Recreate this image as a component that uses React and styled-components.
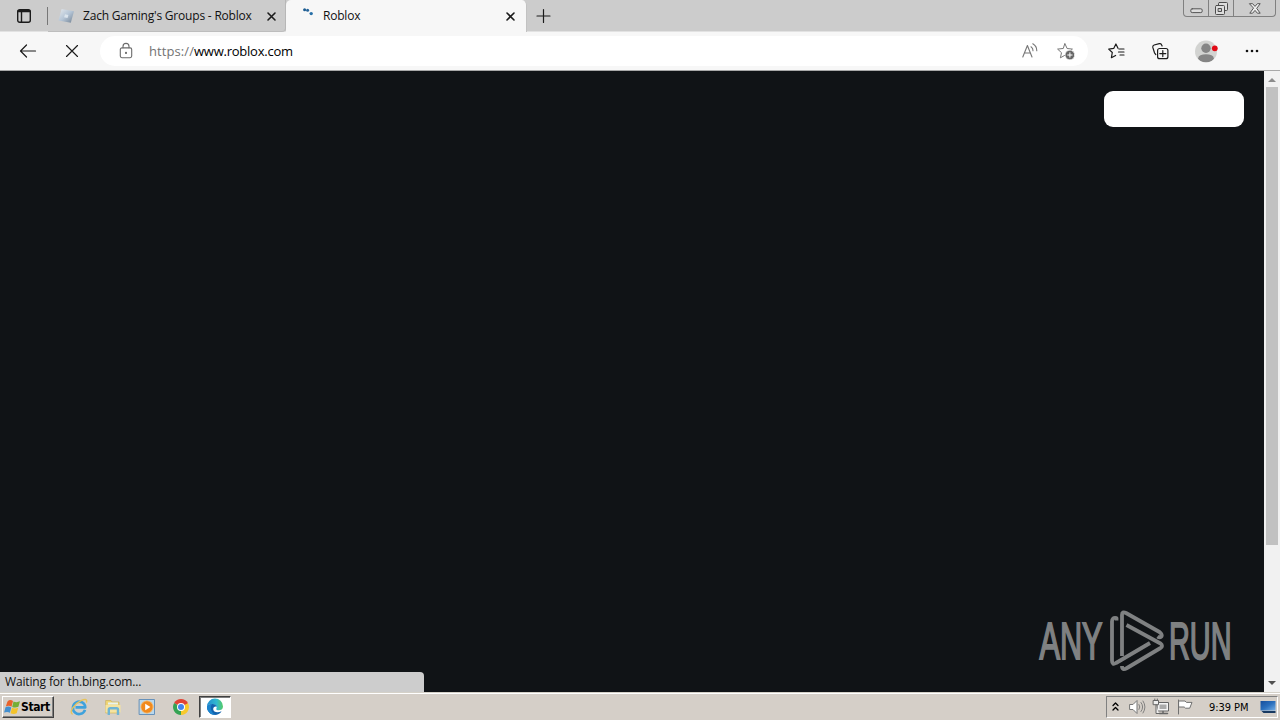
import React from 'react';
import styled, { createGlobalStyle, css } from 'styled-components';

/*──────── constants ────────*/
const UI_FONT = "'Open Sans', 'Noto Sans', sans-serif";
const CLASSIC_FONT = "'DejaVu Sans Condensed', 'DejaVu Sans', sans-serif";

const GlobalStyle = createGlobalStyle`
  *, *::before, *::after { box-sizing: border-box; }
  body { margin: 0; overflow: hidden; background: #d4d0c8; }
`;

const Desktop = styled.div`
  display: flex; flex-direction: column;
  width: 1280px; height: 720px; overflow: hidden;
  font: 12px/16px ${UI_FONT}; color: #111;
`;

/*──────── tab strip ────────*/
const TabStrip = styled.header`
  display: flex; align-items: stretch;
  height: 32px; flex: none;
  background: #cccccc;
  border-bottom: 1px solid #e2e2e2;
`;
const TabActions = styled.div`
  display: flex; align-items: center; justify-content: center;
  width: 48px; margin: 7px 0 6px;
  border-right: 1px solid #777;
`;
const Tab = styled.div`
  display: flex; align-items: center;
  height: 32px; padding: 0 11px 0 10px;
  width: ${p => (p.$active ? 241 : 238)}px;
  ${p => p.$active ? css`
    background: #f7f7f7; border-radius: 5px 5px 0 0; padding-left: 16px;
    border-right: 1px solid #c2c2c2;
  ` : css`
    padding: 1px 9px 0 10px;
    border-right: 1px solid #b7b7b7; border-bottom: 1px solid #bdbdbd;
    border-radius: 0 0 4px 0;
  `}
`;
const TabTitle = styled.span`
  flex: 1; margin-left: ${p => p.$gap}px; white-space: nowrap;
  letter-spacing: -0.2px;
`;
const NewTab = styled.div`
  display: flex; align-items: center; padding-left: 9px;
`;
const CaptionButtons = styled.div`
  display: flex; height: 17px; margin: 0 4px 0 auto;
  border: 1px solid #808080; border-top: 0; border-radius: 0 0 4px 4px;
  overflow: hidden;
`;
const CaptionButton = styled.div`
  display: flex; align-items: center; justify-content: center;
  width: ${p => p.$width}px; border-left: ${p => (p.$first ? 0 : '1px solid #808080')};
  padding-top: ${p => p.$drop || 0}px;
`;

/*──────── toolbar ────────*/
const Toolbar = styled.div`
  display: flex; align-items: center;
  height: 39px; flex: none; padding: 0 21px 0 19px;
  background: #f7f7f7; border-bottom: 1px solid #a8a8a8;
`;
const NavButtons = styled.div`
  display: flex; align-items: center; gap: 27px; width: 81px;
`;
const AddressBar = styled.div`
  display: flex; align-items: center;
  width: 988px; height: 30px; padding: 0 13px 0 18px;
  border-radius: 15px; background: #fff;
`;
const Url = styled.span`
  flex: 1; margin-left: 16px;
  font-size: 13px; color: #000; letter-spacing: -0.24px;
  span { color: #737373; letter-spacing: 0.08px; }
`;
const AddressActions = styled.div`
  display: flex; align-items: center; gap: 18px;
`;
const ToolbarActions = styled.div`
  display: flex; align-items: center; justify-content: space-between;
  flex: 1; margin-left: 20px;
`;

/*──────── page ────────*/
const Viewport = styled.main`
  position: relative;
  display: flex; height: 621px; flex: none;
`;
const Page = styled.div`
  display: flex; flex-direction: column; justify-content: space-between; align-items: flex-end;
  flex: 1; padding: 20px 20px 19px 0;
  background: #101316;
`;
const BlankButton = styled.div`
  width: 140px; height: 36px; border-radius: 9px; background: #fff;
`;
const Watermark = styled.svg`
  display: block; width: 208px; height: 64px; margin-right: 6px; overflow: visible;
`;
const Scrollbar = styled.div`
  display: flex; flex-direction: column; align-items: center;
  width: 16px; background: #f1f1f1;
`;
const ScrollArrow = styled.div`
  display: flex; align-items: center; justify-content: center;
  height: 16px; margin-top: ${p => (p.$bottom ? 'auto' : 0)};
  padding: ${p => (p.$bottom ? '0 0 2px' : '2px 0 0')};
`;
const Thumb = styled.div`
  width: 12px; height: 458px; background: #c1c1c1;
`;
const StatusBubble = styled.div`
  position: absolute; left: 0; bottom: 0;
  width: 424px; height: 20px; padding: 2px 5px;
  border-radius: 0 4px 0 0; background: #cdcdcd;
  letter-spacing: -0.15px;
`;

/*──────── taskbar ────────*/
const Taskbar = styled.footer`
  display: flex; align-items: center;
  height: 28px; flex: none; padding: 3px 2px 2px;
  background: #d5cfc8; border-top: 1px solid #d5d1c8;
  box-shadow: inset 0 1px 0 #fff;
  font-family: ${CLASSIC_FONT};
`;
const StartButton = styled.div`
  display: flex; align-items: center;
  width: 52px; height: 22px; padding-left: 1px;
  border: 1px solid; border-color: #fff #404040 #404040 #fff;
  box-shadow: inset -1px -1px 0 #808080;
  font-size: 12px; font-weight: 700; letter-spacing: -0.4px; color: #000;
`;
const QuickLaunch = styled.div`
  display: flex; align-items: center; gap: 16px; margin-left: 16px;
`;
const TaskButton = styled.div`
  display: flex; align-items: center; justify-content: center;
  width: 32px; height: 22px; margin-left: 9px;
  background: #fff;
  border: 1px solid; border-color: #404040 #fff #fff #404040;
  box-shadow: inset 1px 1px 0 #808080;
`;
const Tray = styled.div`
  display: flex; align-items: center;
  width: 172px; height: 22px; margin-left: auto; padding-left: 5px;
  border: 1px solid; border-color: #808080 #fff #fff #808080;
`;
const Clock = styled.span`
  margin: 1px 10px 0 16px; width: 41px; white-space: nowrap;
  font-size: 11px; letter-spacing: -0.06px; color: #000;
`;

/*──────── icons ────────*/
const Svg = styled.svg`
  display: block; flex: none; overflow: visible;
  fill: none; stroke: ${p => p.$color || '#1b1b1b'}; stroke-width: ${p => p.$weight || 1};
  stroke-linecap: round; stroke-linejoin: round;
  margin-left: ${p => p.$left || 0}px;
`;
const Icon = ({ w, h = w, color, weight, left, children }) => (
  <Svg width={w} height={h} viewBox={`0 0 ${w} ${h}`} $color={color} $weight={weight} $left={left}>
    {children}
  </Svg>
);

const TabActionsIcon = () => (
  <Icon w={14} weight={1.4}>
    <rect x="0.7" y="0.7" width="12.6" height="12.6" rx="2" />
    <path d="M1.5 2.2h11" strokeWidth="2.2" />
    <path d="M4.5 3v10" />
  </Icon>
);
const RobloxFavicon = () => (
  <Icon w={16} color="none">
    <defs>
      <linearGradient id="rbx" x1="0" y1="0" x2="1" y2="1">
        <stop offset="0" stopColor="#e4e8ec" /><stop offset="0.5" stopColor="#b5c5d6" /><stop offset="1" stopColor="#718192" />
      </linearGradient>
    </defs>
    <path d="M3.6 1L16 3.2L12.8 14.8L0.5 12.4Z" fill="url(#rbx)" />
    <path d="M7 6.2l3.4 0.7-0.9 3.1-3.4-0.7z" fill="#dce5ed" />
  </Icon>
);
const Spinner = () => (
  <Icon w={16} color="none">
    <circle cx="2.6" cy="1.8" r="1.5" fill="#1c5c91" />
    <circle cx="5.6" cy="2.2" r="1.5" fill="#25649a" />
    <circle cx="9.2" cy="5.6" r="1.7" fill="#2870a8" />
  </Icon>
);
const TabClose = () => (
  <Icon w={9} weight={1.6}><path d="M1 1l7 7M8 1L1 8" /></Icon>
);
const BackIcon = () => (
  <Icon w={17} h={14} weight={1.2}><path d="M16.5 7H1.5M7.5 1L1.5 7l6 6" /></Icon>
);
const StopIcon = () => (
  <Icon w={12} weight={1.15} left={3}><path d="M0.5 0.5l11 11M11.5 0.5l-11 11" /></Icon>
);
const LockIcon = () => (
  <Icon w={14} h={16} color="#6b6b6b" weight={1.1} left={1}>
    <rect x="1.3" y="4.9" width="11.4" height="9.8" rx="1.6" />
    <path d="M4 4.8V3.4a3 3 0 0 1 6 0V4.8" />
    <circle cx="7" cy="9.9" r="0.5" fill="#6b6b6b" />
  </Icon>
);
const ReadAloudIcon = () => (
  <Icon w={17} h={16} color="#777" weight={1.1}>
    <path d="M0.8 14L5.4 2.5L10 14M2.5 10h5.8M9 3.8a4.5 4.5 0 0 1 2 4M10.8 0.8a8 8 0 0 1 4 7" />
  </Icon>
);
const STAR = 'M8 0.8L10.1 5.5L15.4 6.1L11.5 9.7L12.6 14.8L8 12.2L3.4 14.8L4.5 9.7L0.6 6.1L5.9 5.5Z';
const AddFavoriteIcon = () => (
  <Icon w={18} h={18} color="#777">
    <path d={STAR} transform="translate(0 1)" />
    <circle cx="12.9" cy="13" r="4.8" fill="#666" stroke="#fff" strokeWidth="0.6" />
    <path d="M10.7 13h4.4M12.9 10.8v4.4" stroke="#fff" />
  </Icon>
);
const FavoritesIcon = () => (
  <Icon w={17} h={16} weight={1.2}>
    <path d="M10 5.3L7.9 1L5.7 5.4L0.7 6.1L4.3 9.5L3.4 14.7L7.6 12.5M11 6h5M10.5 9h5.5M12 12h4" />
  </Icon>
);
const CollectionsIcon = () => (
  <Icon w={17} h={17} weight={1.2}>
    <rect x="5.6" y="5.5" width="10.3" height="10.2" rx="2" />
    <path d="M10.8 7.6v6M7.8 10.6h6M3.8 11.6L2.5 9.8L0.8 4.4a2 2 0 0 1 1.3-2.4l5.2-1.3a2 2 0 0 1 2.4 1.3l0.4 1" />
  </Icon>
);
const ProfileIcon = () => (
  <Icon w={23} color="none">
    <defs><clipPath id="face"><circle cx="11" cy="11.5" r="11" /></clipPath></defs>
    <circle cx="11" cy="11.5" r="11" fill="#d2d3d1" />
    <g clipPath="url(#face)" fill="#858585">
      <circle cx="11" cy="8.2" r="4.7" />
      <ellipse cx="11" cy="18.2" rx="7.8" ry="4" />
    </g>
    <circle cx="19.8" cy="8.3" r="2.9" fill="#e10b17" />
  </Icon>
);
const MoreIcon = () => (
  <Icon w={14} h={4} color="none">
    {[2, 7, 12].map(x => <circle key={x} cx={x} cy="2" r="1.3" fill="#111" />)}
  </Icon>
);

/* caption glyphs have a light core with a dark outline */
const MinimizeGlyph = () => (
  <Icon w={13} h={5} color="#555"><rect x="0.8" y="0.8" width="11.4" height="3.8" rx="1.4" fill="#ddd" /></Icon>
);
const RestoreGlyph = () => (
  <Icon w={13} color="#4c4c4c">
    <rect x="3.5" y="0.5" width="9" height="8" rx="1" fill="#ddd" />
    <rect x="0.5" y="3.5" width="9" height="9" rx="1" fill="#ddd" />
    <rect x="3.5" y="6.5" width="3" height="3" fill="#ccc" />
  </Icon>
);
const CloseGlyph = () => (
  <Icon w={12} h={11}>
    <path d="M0.8 0.7H3.6L6 3.4L8.4 0.7H11.2L7.7 5.4L11.2 10.2H8.4L6 7.4L3.6 10.2H0.8L4.3 5.4Z" fill="#eee" stroke="#555" />
  </Icon>
);

const WindowsFlag = () => (
  <Icon w={17} color="none">
    <path d="M3.5 2.4Q6 0 9 2L7.5 7.7Q5 6 1.8 7.4Z" fill="#e9622a" />
    <path d="M9.5 2.4Q12.5 3.9 16 2.3L14.4 7.8Q11.3 9.3 8.2 7.9Z" fill="#75ae35" />
    <path d="M1.5 8.3Q4.4 6.7 7.3 8.5L5.9 13.8Q3.4 12.2 0.1 13.6Z" fill="#438fcf" />
    <path d="M8 8.8Q11 10.2 14.2 8.8L12.7 14.2Q9.6 15.7 6.5 14.2Z" fill="#f3c32b" />
  </Icon>
);
const IeIcon = () => (
  <Icon w={18}>
    <path d="M15 11.8A6.2 6.2 0 1 1 15.3 9.4H5.5" stroke="#3fa2dc" strokeWidth="2.6" strokeLinecap="butt" />
    <path d="M2.2 16C-1 14 4 6 11 2.6C14.7 0.8 17.4 1 16.5 4" stroke="#e6c35c" strokeWidth="1.4" />
  </Icon>
);
const ExplorerIcon = () => (
  <Icon w={18}>
    <path d="M2 2.5h5l1 1.5h7v11H2z" fill="#efd574" stroke="#cdb25a" strokeWidth="0.7" />
    <path d="M4 4.5h10v2H4z" fill="#e9f3ee" stroke="none" />
    <path d="M1.5 7h15v7.5h-15z" fill="#f5e3a0" stroke="none" />
    <path d="M4.8 17V11.6q0-1.4 1.4-1.4h6.4q1.4 0 1.4 1.4V17" stroke="#6fb4d4" strokeWidth="2.4" strokeLinecap="butt" />
  </Icon>
);
const PlayerIcon = () => (
  <Icon w={18}>
    <rect x="1.5" y="1.5" width="15" height="15" fill="#b9d8ed" stroke="#6792bb" />
    <circle cx="9" cy="9" r="6.2" fill="#f18a1d" stroke="#f5c27f" strokeWidth="0.8" />
    <path d="M7.2 5.7L12.4 9L7.2 12.3Z" fill="#fff" stroke="none" />
  </Icon>
);
const ChromeIcon = () => (
  <Icon w={18} color="none">
    <path d="M9 9L2.1 5A8 8 0 0 1 15.9 5Z" fill="#e14335" />
    <path d="M9 9L15.9 5A8 8 0 0 1 9 17Z" fill="#f7c92c" />
    <path d="M9 9V17A8 8 0 0 1 2.1 5Z" fill="#35a354" />
    <path d="M9 5h6.9L9 9z" fill="#e14335" />
    <circle cx="9" cy="9" r="4" fill="#fff" /><circle cx="9" cy="9" r="3" fill="#4384ee" />
  </Icon>
);
const EdgeIcon = () => (
  <Icon w={18} color="none">
    <defs>
      <linearGradient id="edgeTop" x1="0" x2="1"><stop offset="0" stopColor="#228ed0" /><stop offset="0.6" stopColor="#31b9d0" /><stop offset="1" stopColor="#58cc64" /></linearGradient>
    </defs>
    <path d="M1 8.6A8 8 0 0 1 17 8.4C17 11 15 12.2 12.5 12.2C10 12.2 10 11 10.6 10C11.2 8.3 9 6 6 6C3.5 6 1.6 7.4 1 8.6Z" fill="url(#edgeTop)" />
    <path d="M1 8.6C2.2 6.8 4.5 5.8 6.8 6.1C9 6.4 10.6 7.5 10.8 8.7C9 7.8 7 9.3 7.2 11.3C7.4 14 11.2 15.4 15.6 13.3C14 16 11.5 17 9 17C4 17 0.8 13 1 8.6Z" fill="#1263ae" />
    <path d="M1 8.6C1.7 7.2 4 6 6.5 6.1C3.8 7.6 4 14 9.4 17C4.4 17.1 0.6 13 1 8.6Z" fill="#1c84ce" />
  </Icon>
);
const TrayChevrons = () => (
  <Icon w={7} h={9} color="#000" weight={1.3}><path d="M1 2.5L3.5 0L6 2.5M1 7L3.5 4.5L6 7" /></Icon>
);
const VolumeIcon = () => (
  <Icon w={17} h={16} color="#777" left={10}>
    <path d="M1 5.5h3L8 1.5v13L4 10.5H1z" fill="#fff" />
    <path d="M10 5.5q1.8 2.5 0 5M12 3.5q3.4 4.5 0 9M14 2q4 6 0 12" strokeWidth="0.9" />
  </Icon>
);
const NetworkIcon = () => (
  <Icon w={16} h={16} color="#666" left={7}>
    <rect x="4.5" y="3.5" width="11" height="8.5" fill="#f4f4f4" />
    <rect x="6.5" y="5.5" width="7" height="4.5" fill="#aaa" stroke="none" />
    <path d="M10 12.5v1.5M6.5 14.5h8" strokeWidth="1.5" />
    <path d="M0.5 1.5h5v4.2h-5zM1.8 1V0M4.3 1V0M3 6v8.5H6" fill="#eee" />
  </Icon>
);
const FlagIcon = () => (
  <Icon w={16} h={16} color="#707070" left={8}>
    <path d="M1.5 1v14M2 2h6l1.5 1.4H15L12.7 9.2H8.5L7.2 8H2z" fill="#fff" />
  </Icon>
);
const DesktopIcon = () => (
  <Icon w={16} h={14} color="none">
    <defs><linearGradient id="scr" x1="0" y1="0" x2="1" y2="1"><stop offset="0" stopColor="#164e9b" /><stop offset="0.5" stopColor="#2a6fbd" /><stop offset="1" stopColor="#76aee4" /></linearGradient></defs>
    <path d="M0.5 1H15.5V10.5H0.5Z" fill="url(#scr)" />
    <path d="M1.5 11H15.5V13H3.5Z" fill="#173961" />
  </Icon>
);

const WatermarkText = styled.text`
  font: 52px 'Liberation Sans', sans-serif;
  fill: #7f8182; stroke: #7f8182; stroke-width: 1.6px;
  vector-effect: non-scaling-stroke;
`;
const AnyRunWatermark = () => (
  <Watermark viewBox="1030 609 208 64">
    <WatermarkText transform="translate(1039.5 659) scale(0.59 1)">ANY</WatermarkText>
    <WatermarkText transform="translate(1169 659) scale(0.555 1)">RUN</WatermarkText>
    <g fill="none" stroke="#7f8182" strokeWidth="3.8" strokeLinecap="butt" strokeLinejoin="round">
      <path d="M1116.5 620.5V618Q1112 617 1112 621.5V660.5Q1112 665.5 1116 663L1150 643" />
      <path d="M1122 656V615Q1122 611 1126 613L1159.5 632Q1162.5 634.5 1161.5 636.5Q1159.5 638 1157.5 636.5" />
      <path d="M1126.5 625L1160.5 643.5Q1163.5 646 1160.5 648L1127 668Q1122 671 1122 666" />
    </g>
  </Watermark>
);

/*──────── component ────────*/
export default function App() {
  return (
    <>
      <GlobalStyle />
      <Desktop>
        <TabStrip>
          <TabActions><TabActionsIcon /></TabActions>
          <Tab>
            <RobloxFavicon />
            <TabTitle $gap={9}>Zach Gaming's Groups - Roblox</TabTitle>
            <TabClose />
          </Tab>
          <Tab $active>
            <Spinner />
            <TabTitle $gap={5}>Roblox</TabTitle>
            <TabClose />
          </Tab>
          <NewTab><Icon w={14} weight={1.2}><path d="M7.5 0.5v13M1 7h13" /></Icon></NewTab>
          <CaptionButtons>
            <CaptionButton $width={24} $first $drop={4}><MinimizeGlyph /></CaptionButton>
            <CaptionButton $width={25}><RestoreGlyph /></CaptionButton>
            <CaptionButton $width={42}><CloseGlyph /></CaptionButton>
          </CaptionButtons>
        </TabStrip>

        <Toolbar>
          <NavButtons><BackIcon /><StopIcon /></NavButtons>
          <AddressBar>
            <LockIcon />
            <Url><span>https://</span>www.roblox.com</Url>
            <AddressActions><ReadAloudIcon /><AddFavoriteIcon /></AddressActions>
          </AddressBar>
          <ToolbarActions>
            <FavoritesIcon /><CollectionsIcon /><ProfileIcon /><MoreIcon />
          </ToolbarActions>
        </Toolbar>

        <Viewport>
          <Page>
            <BlankButton />
            <AnyRunWatermark />
          </Page>
          <Scrollbar>
            <ScrollArrow><Icon w={8} h={4} color="none"><path d="M0 4L4 0L8 4Z" fill="#8c8c8c" /></Icon></ScrollArrow>
            <Thumb />
            <ScrollArrow $bottom><Icon w={8} h={4} color="none"><path d="M0 0H8L4 4Z" fill="#505050" /></Icon></ScrollArrow>
          </Scrollbar>
          <StatusBubble>Waiting for th.bing.com...</StatusBubble>
        </Viewport>

        <Taskbar>
          <StartButton><WindowsFlag />Start</StartButton>
          <QuickLaunch>
            <IeIcon /><ExplorerIcon /><PlayerIcon /><ChromeIcon />
          </QuickLaunch>
          <TaskButton><EdgeIcon /></TaskButton>
          <Tray>
            <TrayChevrons /><VolumeIcon /><NetworkIcon /><FlagIcon />
            <Clock>9:39 PM</Clock>
            <DesktopIcon />
          </Tray>
        </Taskbar>
      </Desktop>
    </>
  );
}
